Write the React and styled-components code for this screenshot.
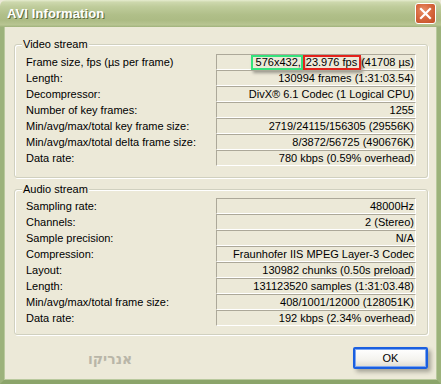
import React from 'react';
import styled, { createGlobalStyle } from 'styled-components';

const Global = createGlobalStyle`
  html, body {
    margin: 0;
    padding: 0;
    background: #ece9d8;
  }
  * { box-sizing: border-box; }
`;

const Window = styled.div`
  width: 441px;
  height: 384px;
  display: flex;
  flex-direction: column;
  background: #ece9d8;
  font-family: "Liberation Sans", Arial, sans-serif;
  font-size: 11px;
  color: #000;
  overflow: hidden;
`;

const TitleBar = styled.div`
  height: 27px;
  flex-shrink: 0;
  display: flex;
  align-items: center;
  justify-content: space-between;
  padding: 0 5px 0 7px;
  border-radius: 6px 6px 0 0;
  background: linear-gradient(
    to bottom,
    #e6ecd0 0%,
    #cdd8ad 8%,
    #bfcc9b 25%,
    #b0bf89 55%,
    #acbb84 75%,
    #b8c592 92%,
    #9fb17a 100%
  );
`;

const Title = styled.span`
  color: #fff;
  font-weight: bold;
  font-size: 13px;
  letter-spacing: 0.1px;
  text-shadow: 1px 1px 0 #5d6b3c;
`;

const CloseButton = styled.div`
  width: 21px;
  height: 21px;
  border: 1px solid #fff;
  border-radius: 3px;
  display: flex;
  align-items: center;
  justify-content: center;
  background: radial-gradient(circle at 40% 35%, #e9916a 0%, #d8693f 45%, #c14d25 100%);
`;

const Frame = styled.div`
  flex: 1;
  display: flex;
  flex-direction: column;
  border-left: 4px solid #9cb27b;
  border-right: 4px solid #9cb27b;
  border-bottom: 4px solid #8ba46a;
  box-shadow: inset 1px 0 0 #b9c99d, inset -1px 0 0 #b9c99d, inset 0 -1px 0 #b9c99d;
  padding: 17px 9px 0 10px;
`;

const Group = styled.div`
  position: relative;
  border: 1px solid #d0d0bf;
  border-radius: 3px;
  box-shadow: 1px 1px 0 #fff inset, 1px 1px 0 #fff;
  padding: ${(p) => p.$pad};
  margin-bottom: ${(p) => p.$gap}px;
`;

const Legend = styled.span`
  position: absolute;
  top: -7px;
  left: 7px;
  padding: 0 1px;
  background: #ece9d8;
  line-height: 13px;
`;

const Row = styled.div`
  display: grid;
  grid-template-columns: 1fr 200px;
  height: 16px;
  align-items: center;
`;

const Label = styled.span`
  white-space: nowrap;
`;

const Value = styled.div`
  height: 16px;
  border-top: 1px solid #aca899;
  border-left: 1px solid #aca899;
  border-right: 1px solid #fff;
  border-bottom: 1px solid #fff;
  display: flex;
  align-items: center;
  justify-content: flex-end;
  padding-right: 1px;
  white-space: nowrap;
`;

const Mark = styled.span`
  display: inline-block;
  height: 15px;
  line-height: 11px;
  border: 2px solid ${(p) => p.$color};
  padding: ${(p) => p.$pad};
  box-shadow: 2px 3px 3px rgba(0, 0, 0, 0.35);
`;

const Footer = styled.div`
  flex: 1;
  display: flex;
  align-items: flex-start;
  justify-content: space-between;
`;

const Watermark = styled.span`
  margin: 5px 0 0 74px;
  font-family: "DejaVu Sans", "Liberation Sans", sans-serif;
  font-weight: bold;
  font-size: 14px;
  color: #b9b6a8;
`;

const OkButton = styled.button`
  width: 75px;
  height: 22px;
  margin-top: 1px;
  font-family: "Liberation Sans", Arial, sans-serif;
  font-size: 11px;
  color: #000;
  border: 2px solid #1a5fe0;
  border-radius: 2px;
  background: linear-gradient(to bottom, #ffffff 0%, #f4f3ee 60%, #dedbcf 100%);
  box-shadow: inset 0 0 0 1px #7ea6ef, 3px 3px 4px rgba(0, 0, 0, 0.3);
  padding: 0;
`;

const video = [
  ['Frame size, fps (µs per frame)', null],
  ['Length:', '130994 frames (1:31:03.54)'],
  ['Decompressor:', 'DivX® 6.1 Codec (1 Logical CPU)'],
  ['Number of key frames:', '1255'],
  ['Min/avg/max/total key frame size:', '2719/24115/156305 (29556K)'],
  ['Min/avg/max/total delta frame size:', '8/3872/56725 (490676K)'],
  ['Data rate:', '780 kbps (0.59% overhead)'],
];

const audio = [
  ['Sampling rate:', '48000Hz'],
  ['Channels:', '2 (Stereo)'],
  ['Sample precision:', 'N/A'],
  ['Compression:', 'Fraunhofer IIS MPEG Layer-3 Codec'],
  ['Layout:', '130982 chunks (0.50s preload)'],
  ['Length:', '131123520 samples (1:31:03.48)'],
  ['Min/avg/max/total frame size:', '408/1001/12000 (128051K)'],
  ['Data rate:', '192 kbps (2.34% overhead)'],
];

function FrameSize() {
  return (
    <Value>
      <Mark $color="#35e27c" $pad="0 0 0 3px">576x432,</Mark>
      <Mark $color="#e3231c" $pad="0 2px 0 1px">23.976 fps</Mark>
      (41708 µs)
    </Value>
  );
}

function Rows({ items }) {
  return items.map(([label, value]) => (
    <Row key={label}>
      <Label>{label}</Label>
      {value === null ? <FrameSize /> : <Value>{value}</Value>}
    </Row>
  ));
}

export default function App() {
  return (
    <>
      <Global />
      <Window>
        <TitleBar>
          <Title>AVI Information</Title>
          <CloseButton>
            <svg width="13" height="13" viewBox="0 0 13 13">
              <path d="M2 2 L11 11 M11 2 L2 11" stroke="#fff" strokeWidth="2.2" strokeLinecap="square" />
            </svg>
          </CloseButton>
        </TitleBar>
        <Frame>
          <Group $pad="9px 11px 11px 11px" $gap={11}>
            <Legend>Video stream</Legend>
            <Rows items={video} />
          </Group>
          <Group $pad="8px 11px 8px 11px" $gap={11}>
            <Legend>Audio stream</Legend>
            <Rows items={audio} />
          </Group>
          <Footer>
            <Watermark>אנריקו</Watermark>
            <OkButton>OK</OkButton>
          </Footer>
        </Frame>
      </Window>
    </>
  );
}
